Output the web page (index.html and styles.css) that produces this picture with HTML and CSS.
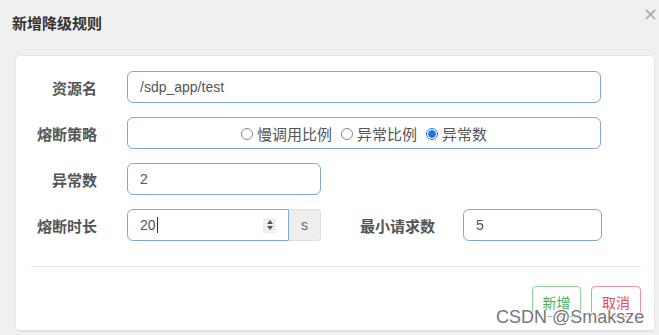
FILE: index.html
```html
<!DOCTYPE html>
<html lang="zh">
<head>
<meta charset="utf-8">
<title>新增降级规则</title>
<link rel="stylesheet" href="styles.css">
</head>
<body>
<div class="dialog">
  <div class="header">
    <h3 class="title">新增降级规则</h3>
    <span class="close">×</span>
  </div>
  <div class="card">
    <div class="row">
      <label class="label">资源名</label>
      <div class="field w-full"><span class="val">/sdp_app/test</span></div>
    </div>
    <div class="row">
      <label class="label">熔断策略</label>
      <div class="field w-full radios">
        <span class="radio"><span class="dot"></span>慢调用比例</span>
        <span class="radio"><span class="dot"></span>异常比例</span>
        <span class="radio"><span class="dot on"></span>异常数</span>
      </div>
    </div>
    <div class="row">
      <label class="label">异常数</label>
      <div class="field w-half"><span class="val">2</span></div>
    </div>
    <div class="row row-last">
      <label class="label">熔断时长</label>
      <div class="group">
        <div class="field grp-input"><span class="val">20</span><span class="caret"></span><span class="spin"><span class="up"></span><span class="down"></span></span></div>
        <span class="addon">s</span>
      </div>
      <label class="label label2">最小请求数</label>
      <div class="field w-small"><span class="val">5</span></div>
    </div>
    <div class="sep"></div>
    <div class="actions">
      <button class="btn btn-ok">新增</button>
      <button class="btn btn-cancel">取消</button>
    </div>
  </div>
  <div class="watermark">CSDN @Smaksze</div>
</div>
</body>
</html>
```
FILE: styles.css
```css
* { box-sizing: border-box; }
html, body { margin: 0; padding: 0; }
body {
  background: #f0f0f0;
  font-family: "Liberation Sans", "Noto Sans CJK SC", sans-serif;
  color: #555;
  width: 659px;
  height: 335px;
  overflow: hidden;
}
.dialog { position: relative; width: 659px; height: 335px; }
.header {
  display: flex;
  justify-content: space-between;
  align-items: flex-start;
  height: 55px;
  padding: 13px 0 0 12px;
}
.title {
  margin: 0;
  font-size: 15px;
  font-weight: bold;
  color: #333;
  line-height: 20px;
  font-family: "Noto Sans CJK SC", sans-serif;
}
.close {
  margin-top: -9px;
  margin-right: 1px;
  font-size: 18px;
  color: #aaa;
  line-height: 20px;
  font-family: "DejaVu Sans", sans-serif;
}
.card {
  margin-left: 15px;
  width: 640px;
  height: 277px;
  background: #fff;
  border: 1px solid #e6e6e6;
  border-bottom: 2px solid #e2e2e2;
  border-radius: 5px;
  padding: 15px 13px 0 15px;
}
.row {
  display: flex;
  align-items: center;
  height: 32px;
  margin-bottom: 14px;
}
.row-last { margin-bottom: 0; margin-top: 1px; }
.label {
  width: 66px;
  margin-right: 30px;
  text-align: right;
  font-size: 15px;
  font-weight: bold;
  color: #555;
  font-family: "Noto Sans CJK SC", sans-serif;
  white-space: nowrap;
}
.label2 { width: 76px; margin-left: 38px; margin-right: 28px; }
.field {
  height: 32px;
  border: 1px solid #7ea9d9;
  border-radius: 6px;
  display: flex;
  align-items: center;
  padding-left: 12px;
  font-size: 14px;
  color: #555;
}
.w-full { width: 474px; }
.w-half { width: 194px; }
.w-small { width: 139px; }
.radios { justify-content: center; padding-left: 0; }
.radio {
  display: inline-flex;
  align-items: center;
  margin-right: 9px;
  font-family: "Noto Sans CJK SC", sans-serif;
  font-size: 15px;
  color: #555;
}
.radio:last-child { margin-right: 0; }
.dot {
  width: 12px;
  height: 12px;
  border: 1px solid #8a8a8a;
  border-radius: 50%;
  margin-right: 4px;
  margin-top: 1px;
  background: #fff;
}
.dot.on {
  border: 1px solid #1a73e8;
  background: radial-gradient(circle, #1a73e8 0 3.5px, #fff 4px);
}
.group { display: flex; width: 194px; height: 32px; }
.grp-input {
  width: 162px;
  border-radius: 6px 0 0 6px;
  padding-right: 12px;
}
.caret { width: 1px; height: 16px; background: #333; margin-left: 1px; }
.spin {
  margin-left: auto;
  width: 13px;
  height: 15px;
  background: #eee;
  display: flex;
  flex-direction: column;
  align-items: center;
  justify-content: center;
  gap: 2px;
}
.up, .down { width: 0; height: 0; border-left: 3px solid transparent; border-right: 3px solid transparent; }
.up { border-bottom: 4px solid #555; }
.down { border-top: 4px solid #555; }
.addon {
  width: 32px;
  height: 32px;
  background: #eee;
  border: 1px solid #ddd;
  border-left: none;
  border-radius: 0 4px 4px 0;
  display: flex;
  align-items: center;
  justify-content: center;
  font-size: 14px;
  color: #666;
}
.sep { height: 1px; background: #e8e8e8; margin-top: 25px; }
.actions {
  display: flex;
  justify-content: flex-end;
  gap: 10px;
  margin-top: 19px;
  padding-right: 0;
}
.btn {
  height: 31px;
  width: 50px;
  background: #fff;
  border-radius: 4px;
  font-family: "Noto Sans CJK SC", sans-serif;
  font-size: 14px;
  padding: 0;
}
.btn-ok { border: 1.5px solid #8ed39c; color: #4cae5c; width: 49px; }
.btn-cancel { border: 1.5px solid #f0939c; color: #e14b5a; }
.watermark {
  position: absolute;
  left: 496px;
  top: 307px;
  font-size: 18px;
  line-height: 20px;
  color: #777;
  font-family: "Liberation Sans", sans-serif;
  text-shadow: 0 0 2px #fff, 0 0 1px #fff, 1px 1px 0 #fff, -1px -1px 0 #fff;
  white-space: nowrap;
}
```
